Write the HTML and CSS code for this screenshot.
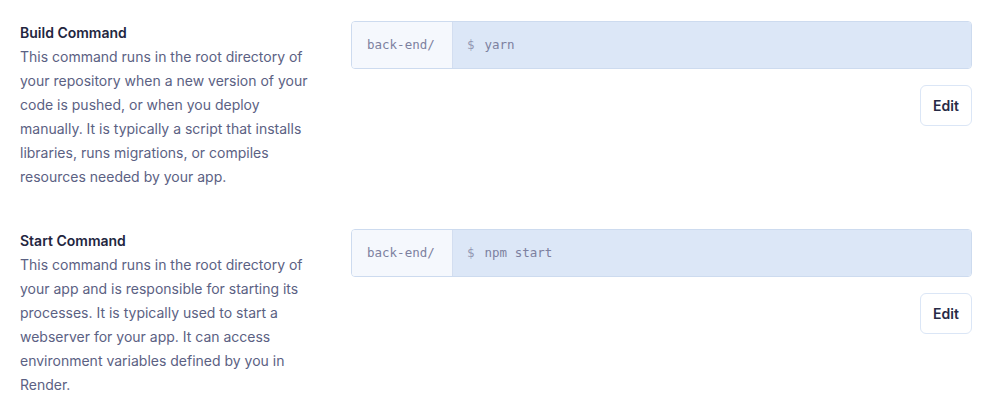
FILE: index.html
```html
<!DOCTYPE html>
<html>
<head>
<meta charset="utf-8">
<link rel="stylesheet" href="styles.css">
</head>
<body>
<div class="settings">
  <section class="row">
    <div class="info">
      <h3 class="title">Build Command</h3>
      <p class="desc">This command runs in the root directory of your repository when a new version of your code is pushed, or when you deploy manually. It is typically a script that installs libraries, runs migrations, or compiles resources needed by your app.</p>
    </div>
    <div class="field">
      <div class="input">
        <span class="prefix">back-end/</span>
        <span class="value"><span class="dollar">$</span>yarn</span>
      </div>
      <div class="actions"><button class="btn">Edit</button></div>
    </div>
  </section>
  <section class="row">
    <div class="info">
      <h3 class="title">Start Command</h3>
      <p class="desc">This command runs in the root directory of your app and is responsible for starting its processes. It is typically used to start a webserver for your app. It can access environment variables defined by you in Render.</p>
    </div>
    <div class="field">
      <div class="input">
        <span class="prefix">back-end/</span>
        <span class="value"><span class="dollar">$</span>npm start</span>
      </div>
      <div class="actions"><button class="btn">Edit</button></div>
    </div>
  </section>
</div>
</body>
</html>
```

FILE: styles.css
```css
html, body {
  margin: 0;
  padding: 0;
  background: #ffffff;
}
body {
  font-family: Inter, "Noto Sans", sans-serif;
  font-size: 14px;
  line-height: 24px;
  color: #5b6183;
}
.settings {
  padding: 20px 18px 0 20px;
  display: flex;
  flex-direction: column;
  gap: 39px;
}
.row {
  display: grid;
  grid-template-columns: 300px 1fr;
  column-gap: 31px;
}
.info {
  padding-top: 1px;
}
.title {
  margin: 0;
  font-size: 14px;
  line-height: 24px;
  font-weight: 600;
  color: #23263f;
}
.desc {
  margin: 0;
}
.field {
  display: flex;
  flex-direction: column;
  gap: 16px;
  padding-top: 1px;
}
.input {
  display: flex;
  height: 46px;
  border: 1px solid #cddbef;
  border-radius: 4px;
  overflow: hidden;
  font-family: "DejaVu Sans Mono", monospace;
  font-size: 12.5px;
  color: #7d81a0;
  white-space: nowrap;
}
.prefix {
  display: flex;
  align-items: center;
  flex: 0 0 auto;
  padding: 0 0 0 15px;
  width: 85px;
  background: #f5f8fd;
  border-right: 1px solid #d3def0;
}
.value {
  flex: 1;
  display: flex;
  align-items: center;
  padding: 0 14px;
  background: #dce7f7;
}
.dollar {
  color: #9397b3;
  margin-right: 10px;
}
.actions {
  display: flex;
  justify-content: flex-end;
}
.btn {
  font-family: Inter, "Noto Sans", sans-serif;
  font-size: 14px;
  font-weight: 600;
  color: #262a45;
  background: #ffffff;
  border: 1px solid #dbe6f6;
  border-radius: 6px;
  width: 52px;
  height: 41px;
  padding: 0;
  cursor: pointer;
}
```
